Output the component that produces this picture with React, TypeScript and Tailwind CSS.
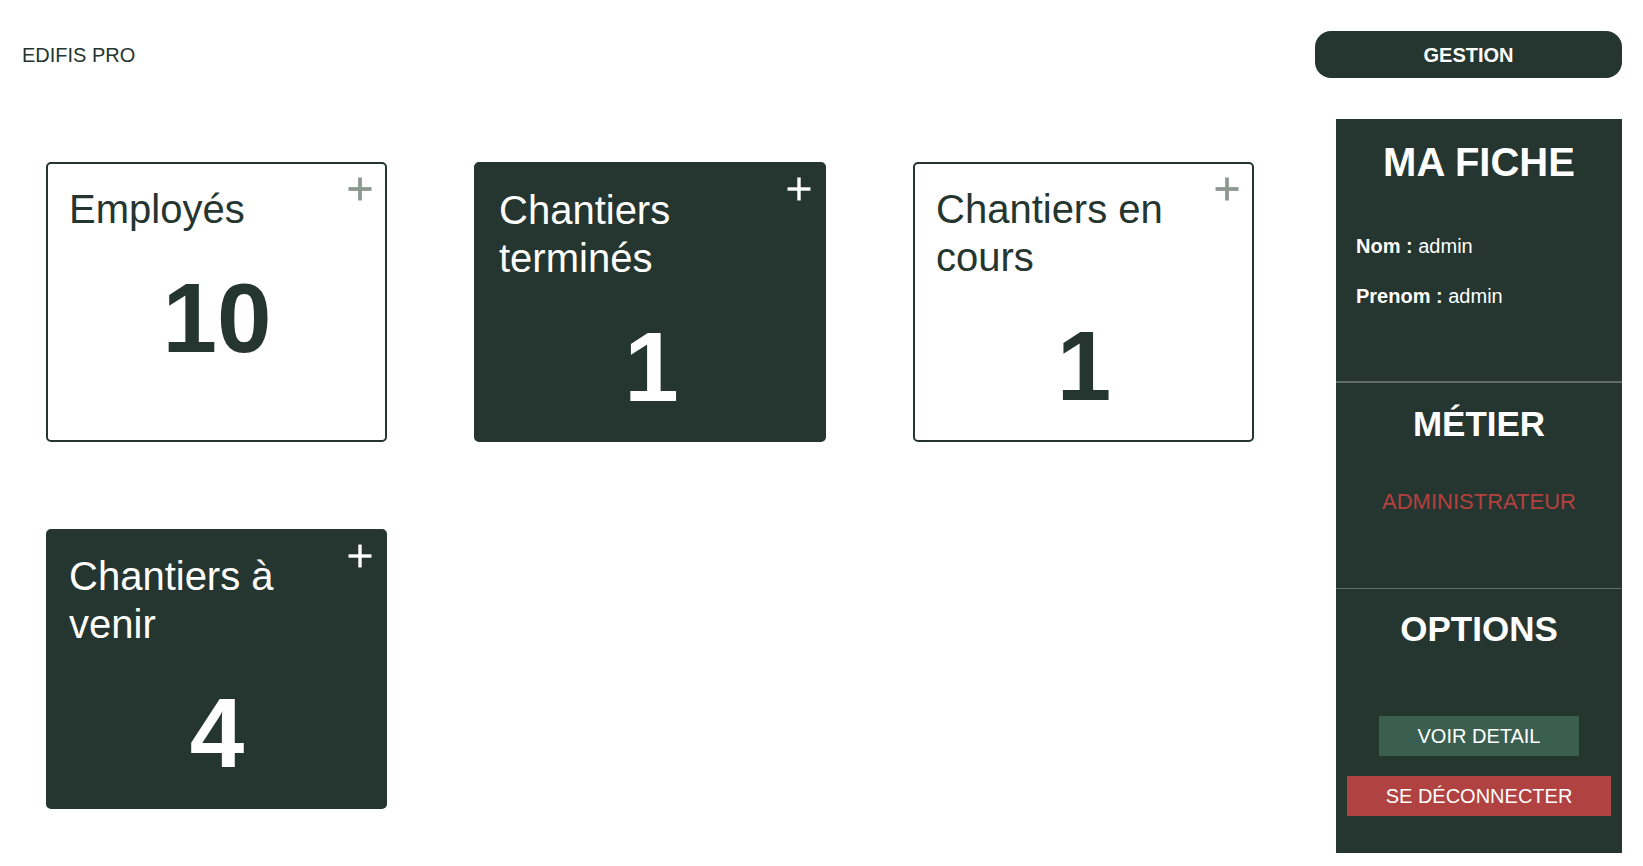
import React from "react";

function Plus({ color, width }: { color: string; width: number }) {
  return (
    <svg
      width="24"
      height="24"
      viewBox="0 0 24 24"
      className="absolute top-[13px] right-[13px]"
    >
      <line x1="12" y1="0.5" x2="12" y2="23.5" stroke={color} strokeWidth={width} />
      <line x1="0.5" y1="12" x2="23.5" y2="12" stroke={color} strokeWidth={width} />
    </svg>
  );
}

function Card({
  title,
  value,
  dark,
  wide,
}: {
  title: React.ReactNode;
  value: string;
  dark?: boolean;
  wide?: boolean;
}) {
  return (
    <div
      className={
        "relative h-[280px] shrink-0 rounded-[5px] border-2 border-[#253530] " +
        (wide ? "w-[352px] pl-[23px] pt-[22px] " : "w-[341px] pl-[21px] pt-[21px] ") +
        (dark ? "bg-[#253530] text-white" : "bg-white text-[#253530]")
      }
    >
      <Plus color={dark ? "#ffffff" : "#8e9893"} width={dark ? 3.4 : 3.8} />
      <div className="text-[40px] leading-[48px]">{title}</div>
      <div className="mt-[25px] pr-[20px] text-center text-[98px] font-bold leading-[120px]">
        {value}
      </div>
    </div>
  );
}

export default function App() {
  return (
    <div
      className="relative h-[866px] w-[1643px] overflow-hidden bg-white text-[#253530]"
      style={{ fontFamily: '"Liberation Sans", Arial, sans-serif' }}
    >
      <header className="flex items-center justify-between pl-[22px] pr-[21px] pt-[31px]">
        <div className="text-[20px] leading-[24px]">EDIFIS PRO</div>
        <button className="h-[47px] w-[307px] rounded-[16px] bg-[#253530] text-[20px] font-bold text-white">
          GESTION
        </button>
      </header>

      <div className="mt-[41px] flex">
        <main className="flex-1 pl-[46px] pt-[43px]">
          <div className="flex gap-[87px]">
            <Card title="Employés" value="10" />
            <Card
              title={
                <>
                  Chantiers
                  <br />
                  terminés
                </>
              }
              value="1"
              dark
              wide
            />
            <Card
              title={
                <>
                  Chantiers en
                  <br />
                  cours
                </>
              }
              value="1"
            />
          </div>
          <div className="mt-[87px] flex">
            <Card
              title={
                <>
                  Chantiers à
                  <br />
                  venir
                </>
              }
              value="4"
              dark
            />
          </div>
        </main>

        <aside className="mr-[21px] flex h-[734px] w-[286px] flex-col bg-[#253530] text-white">
          <section className="h-[262px] pt-[19px]">
            <h1 className="text-center text-[40px] font-bold leading-[48px]">MA FICHE</h1>
            <div className="mt-[48px] pl-[20px] text-[20px] leading-[24px]">
              <p>
                <span className="font-bold">Nom :</span> admin
              </p>
              <p className="mt-[26px]">
                <span className="font-bold">Prenom :</span> admin
              </p>
            </div>
          </section>
          <div className="h-[2px] bg-[#5f6e68]" />
          <section className="h-[205px] pt-[20px] text-center">
            <h2 className="text-[35px] font-bold leading-[42px]">MÉTIER</h2>
            <p className="mt-[44px] text-[22px] leading-[26px] text-[#b5413e]">ADMINISTRATEUR</p>
          </section>
          <div className="h-[1px] bg-[#5f6e68]" />
          <section className="flex flex-1 flex-col items-center pt-[19px]">
            <h2 className="text-center text-[35px] font-bold leading-[42px]">OPTIONS</h2>
            <button className="mt-[66px] h-[40px] w-[200px] bg-[#3a5f50] text-[20px] text-white">
              VOIR DETAIL
            </button>
            <button className="mt-[20px] h-[40px] w-[264px] bg-[#b04241] text-[20px] text-white">
              SE DÉCONNECTER
            </button>
          </section>
        </aside>
      </div>
    </div>
  );
}
